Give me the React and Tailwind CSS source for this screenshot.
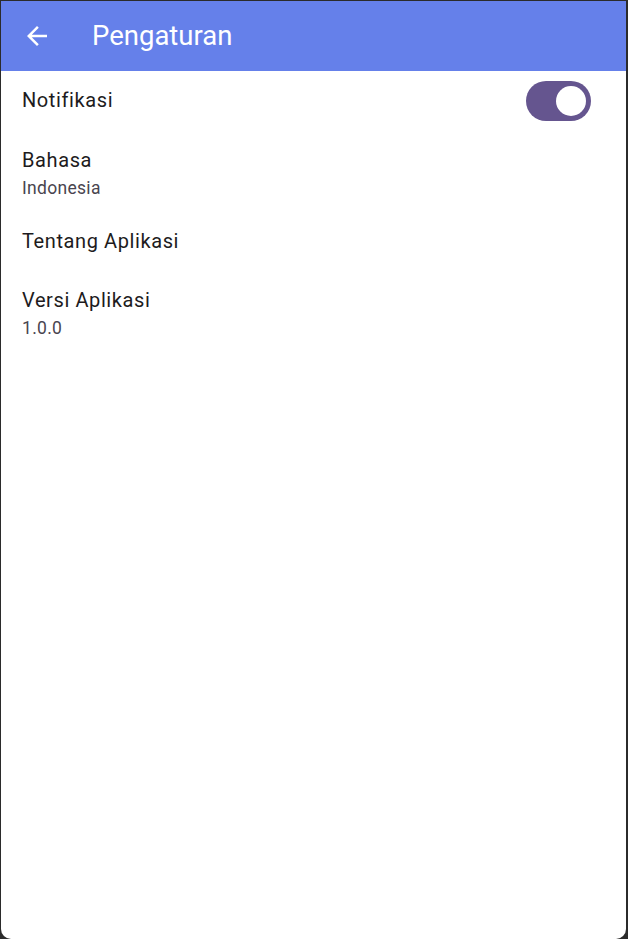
export default function App() {
  const font = { fontFamily: 'Roboto, "Noto Sans", sans-serif' }
  return (
    <div className="h-[939px] w-full bg-[#2b2b2b] pl-px pr-[2px] pt-px" style={font}>
      <div className="flex h-full flex-col overflow-hidden rounded-b-[10px] bg-white">
        <header className="flex h-[70px] shrink-0 items-center bg-[#6580ea] text-white">
          <button className="ml-[21px] flex h-[30px] w-[30px] items-center justify-center">
            <svg viewBox="0 0 24 24" className="h-[30px] w-[30px] fill-white">
              <path d="M20 11H7.83l5.59-5.59L12 4l-8 8 8 8 1.41-1.41L7.83 13H20v-2z" />
            </svg>
          </button>
          <h1 className="ml-[40px] text-[27.5px] leading-none">Pengaturan</h1>
        </header>

        <div className="flex h-[60px] items-center justify-between pl-[21px] pr-[35px]">
          <span className="mb-[2px] text-[20px] tracking-[0.6px] text-[#1d1b20]">Notifikasi</span>
          <div className="flex h-[40px] w-[65px] items-center justify-end rounded-full bg-[#65558f] pr-[5px]">
            <div className="h-[30px] w-[30px] rounded-full bg-white" />
          </div>
        </div>

        <div className="flex h-[80px] flex-col pl-[21px] pt-[15px]">
          <span className="text-[20px] leading-[28px] tracking-[0.6px] text-[#1d1b20]">Bahasa</span>
          <span className="text-[17.5px] leading-[28px] tracking-[0.3px] text-[#49454f]">Indonesia</span>
        </div>

        <div className="flex h-[60px] items-center pl-[21px]">
          <span className="text-[20px] tracking-[0.6px] text-[#1d1b20]">Tentang Aplikasi</span>
        </div>

        <div className="flex h-[80px] flex-col pl-[21px] pt-[15px]">
          <span className="text-[20px] leading-[28px] tracking-[0.6px] text-[#1d1b20]">Versi Aplikasi</span>
          <span className="text-[17.5px] leading-[28px] tracking-[0.3px] text-[#49454f]">1.0.0</span>
        </div>
      </div>
    </div>
  )
}
